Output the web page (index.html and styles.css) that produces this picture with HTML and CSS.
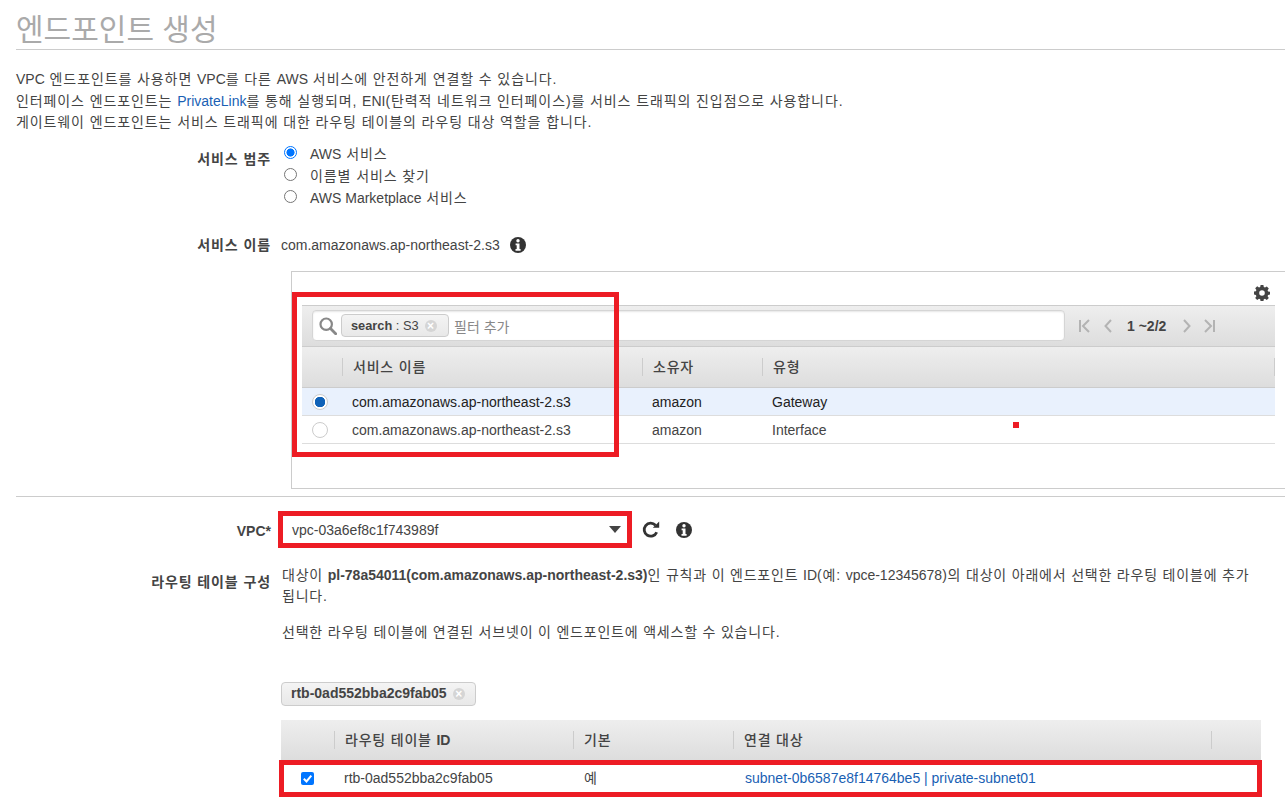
FILE: index.html
```html
<!DOCTYPE html>
<html lang="ko">
<head>
<meta charset="utf-8">
<title>엔드포인트 생성</title>
<link rel="stylesheet" href="styles.css">
</head>
<body>
<main class="page">
  <h1 class="title">엔드포인트 생성</h1>
  <div class="intro ko">
    <p><span class="en">VPC</span> 엔드포인트를 사용하면 <span class="en">VPC</span>를 다른 <span class="en">AWS</span> 서비스에 안전하게 연결할 수 있습니다.</p>
    <p>인터페이스 엔드포인트는 <a class="link en" href="#">PrivateLink</a>를 통해 실행되며, <span class="en">ENI</span>(탄력적 네트워크 인터페이스)를 서비스 트래픽의 진입점으로 사용합니다.</p>
    <p>게이트웨이 엔드포인트는 서비스 트래픽에 대한 라우팅 테이블의 라우팅 대상 역할을 합니다.</p>
  </div>

  <div class="form-row category-row">
    <div class="label ko">서비스 범주</div>
    <div class="radio-list ko">
      <label class="radio-item"><span class="radio on"></span><span><span class="en">AWS</span> 서비스</span></label>
      <label class="radio-item"><span class="radio"></span>이름별 서비스 찾기</label>
      <label class="radio-item"><span class="radio"></span><span><span class="en">AWS Marketplace</span> 서비스</span></label>
    </div>
  </div>

  <div class="form-row name-row">
    <div class="label ko">서비스 이름</div>
    <div class="name-value">com.amazonaws.ap-northeast-2.s3
      <svg class="info" viewBox="0 0 16 16"><circle cx="8" cy="8" r="8" fill="#333"/><circle cx="8" cy="3.7" r="1.7" fill="#fff"/><path d="M5.6 6.5h3.9v5.600h1.100v1.700H5.500v-1.700h1.200V8.200H5.600z" fill="#fff"/></svg>
    </div>
  </div>

  <section class="service-box">
    <div class="gear-line">
      <svg class="gear" viewBox="0 0 16 16"><path fill="#444" fill-rule="evenodd" d="M6.600 0h2.800l.4 2.100 1.200.5L12.800 1.400l2 2-1.200 1.800.5 1.200 2 .4v2.800l-2 .4-.5 1.200 1.200 1.800-2 2-1.800-1.200-1.200.5-.4 2.100H6.600l-.4-2.100-1.200-.5-1.800 1.200-2-2 1.200-1.800-.5-1.200-2-.4V6.600l2-.4.5-1.200-1.200-1.800 2-2L5 2.600l1.200-.5zM8 5.200a2.800 2.800 0 1 0 0 5.600 2.800 2.800 0 0 0 0-5.600z"/></svg>
    </div>
    <div class="service-table">
      <div class="toolbar">
        <div class="search">
          <svg class="mag" viewBox="0 0 18 18"><circle cx="7.200" cy="7.200" r="5.700" fill="none" stroke="#888" stroke-width="2.200"/><path d="M11.500 11.500l5.200 5.200" stroke="#888" stroke-width="2.800" stroke-linecap="round"/></svg>
          <span class="chip search-chip"><b>search</b>&nbsp;: S3<span class="x">×</span></span>
          <span class="placeholder">필터 추가</span>
        </div>
        <div class="pager">
          <svg class="pg-first" viewBox="0 0 11 14"><path d="M1 1v12M10 1L4 7l6 6" fill="none" stroke="#b3b3b3" stroke-width="2"/></svg>
          <svg class="pg-prev" viewBox="0 0 8 14"><path d="M7 1L1.500 7 7 13" fill="none" stroke="#b3b3b3" stroke-width="2"/></svg>
          <b class="pg-text">1 ~2/2</b>
          <svg class="pg-next" viewBox="0 0 8 14"><path d="M1 1l5.500 6L1 13" fill="none" stroke="#b3b3b3" stroke-width="2"/></svg>
          <svg class="pg-last" viewBox="0 0 11 14"><path d="M10 1v12M1 1l6 6-6 6" fill="none" stroke="#b3b3b3" stroke-width="2"/></svg>
        </div>
      </div>
      <table class="grid svc">
        <colgroup><col class="c-a"><col class="c-b"><col class="c-c"><col class="c-d"><col></colgroup>
        <thead><tr>
          <th></th><th><span>서비스 이름</span></th><th><span>소유자</span></th><th><span>유형</span></th><th><span>&nbsp;</span></th>
        </tr></thead>
        <tbody>
          <tr class="selected"><td class="radio-cell"><span class="row-radio on"></span></td><td>com.amazonaws.ap-northeast-2.s3</td><td>amazon</td><td colspan="2">Gateway</td></tr>
          <tr><td class="radio-cell"><span class="row-radio"></span></td><td>com.amazonaws.ap-northeast-2.s3</td><td>amazon</td><td colspan="2">Interface</td></tr>
        </tbody>
      </table>
    </div>
    <i class="mark mark-table"></i>
    <i class="mark-dot"></i>
  </section>

  <hr class="divider">

  <div class="form-row vpc-row">
    <div class="label vpc-label">VPC*</div>
    <div class="select">vpc-03a6ef8c1f743989f<span class="caret"></span></div>
    <svg class="refresh" viewBox="0 0 18 18"><path d="M14.700 11.200A6.500 6.500 0 1 1 13.500 4.300" fill="none" stroke="#333" stroke-width="2.800"/><path d="M10.800 6.800h6.400V.4z" fill="#333"/></svg>
    <svg class="info vpc-info" viewBox="0 0 16 16"><circle cx="8" cy="8" r="8" fill="#333"/><circle cx="8" cy="3.700" r="1.700" fill="#fff"/><path d="M5.600 6.500h3.900v5.600h1.100v1.700H5.500v-1.700h1.200V8.200H5.600z" fill="#fff"/></svg>
  </div>

  <div class="form-row route-row">
    <div class="label ko">라우팅 테이블 구성</div>
    <div class="route-body">
      <div class="route-text">
        <p>대상이 <b class="en">pl-78a54011(com.amazonaws.ap-northeast-2.s3)</b>인 규칙과 이 엔드포인트 <span class="en">ID</span>(예: <span class="en">vpce-12345678</span>)의 대상이 아래에서 선택한 라우팅 테이블에 추가<br>됩니다.</p>
        <p class="route-note">선택한 라우팅 테이블에 연결된 서브넷이 이 엔드포인트에 액세스할 수 있습니다.</p>
      </div>
      <span class="chip rtb-chip"><b>rtb-0ad552bba2c9fab05</b><span class="x">×</span></span>
      <div class="rtb-wrap">
        <table class="grid rtb">
          <colgroup><col class="r-a"><col class="r-b"><col class="r-c"><col class="r-d"><col></colgroup>
          <thead><tr>
            <th></th><th><span>라우팅 테이블 <span class="en id">ID</span></span></th><th><span>기본</span></th><th><span>연결 대상</span></th><th><span>&nbsp;</span></th>
          </tr></thead>
          <tbody>
            <tr><td class="check-cell"><span class="check"><svg viewBox="0 0 13 13"><path d="M2.800 6.800l2.700 2.700 4.800-5.800" fill="none" stroke="#fff" stroke-width="2"/></svg></span></td><td>rtb-0ad552bba2c9fab05</td><td>예</td><td colspan="2"><a class="link" href="#">subnet-0b6587e8f14764be5 | private-subnet01</a></td></tr>
          </tbody>
        </table>
        <i class="mark mark-row"></i>
      </div>
    </div>
  </div>
  <i class="mark mark-select"></i>
</main>
</body>
</html>
```

FILE: styles.css
```css
* { box-sizing: border-box; }
html, body { margin: 0; height: 810px; overflow: hidden; background: #fff; }
body {
  font-family: "Liberation Sans", "Noto Sans CJK KR", sans-serif;
  font-size: 14px;
  color: #444;
}
p { margin: 0; }
.page { position: relative; height: 810px; padding-left: 16px; }
.link { color: #1a5fb4; text-decoration: none; }
.ko { letter-spacing: .9px; }
.en { letter-spacing: 0; }

.title {
  margin: 0;
  height: 50px;
  border-bottom: 1px solid #ccc;
  font-size: 30px;
  font-weight: 400;
  line-height: 29px;
  padding-top: 15px;
  color: #aaa;
}
.intro { padding-top: 19px; line-height: 21.500px; color: #444; }

.form-row { display: flex; }
.label {
  width: 255px;
  flex: none;
  text-align: right;
  font-weight: 700;
  color: #444;
}
.category-row { margin-top: 8px; }
.category-row .label { padding-top: 7px; line-height: 20px; }
.radio-list { margin-left: 13px; display: flex; flex-direction: column; }
.radio-item { display: flex; align-items: center; height: 22px; }
.radio {
  width: 13px; height: 13px; margin-right: 13px;
  border: 1px solid #767676; border-radius: 50%; background: #fff; flex: none;
}
.radio.on { border: 1.500px solid #0075ff; background: radial-gradient(circle, #0075ff 0 3.800px, #fff 4.300px); }

.name-row { margin-top: 27px; line-height: 20px; }
.name-value { margin-left: 10px; display: flex; align-items: center; }
.info { width: 16px; height: 16px; flex: none; }
.name-value .info { margin-left: 10px; }

.service-box {
  position: relative;
  margin: 16px 0 0 275px;
  height: 218px;
  border: 1px solid #ccc;
  border-right: 0;
  padding: 0 10px;
}
.gear-line { height: 33px; display: flex; justify-content: flex-end; padding: 13px 5px 0 0; }
.gear { width: 16px; height: 16px; }
.toolbar {
  height: 42px;
  display: flex;
  align-items: center;
  border-top: 1px solid #ccc;
  border-bottom: 1px solid #ccc;
  background: linear-gradient(#eee, #ddd);
  padding: 0 10px;
}
.search {
  width: 753px; height: 31px;
  display: flex; align-items: center;
  background: #fff;
  border: 1px solid #d5d5d5;
  border-radius: 4px;
  padding-left: 6px;
  box-shadow: inset 0 1px 2px rgba(0,0,0,.1);
}
.mag { width: 18px; height: 18px; flex: none; margin-right: 4px; }
.chip {
  display: inline-flex; align-items: center;
  height: 23px;
  padding: 0 10px 0 9px;
  border: 1px solid #ccc;
  border-radius: 4px;
  background: linear-gradient(#f4f4f4, #e8e8e8);
  color: #444;
  white-space: nowrap;
}
.search-chip { font-size: 12.800px; width: 108px; }
.x {
  width: 12px; height: 12px; margin-left: 6px;
  border-radius: 50%; background: #d5d5d5; color: #fff;
  font-size: 12px; line-height: 12px; text-align: center; font-weight: 700;
}
.placeholder { margin-left: 5px; color: #888; }
.pager { display: flex; align-items: center; margin-left: 14px; }
.pager svg { height: 14px; flex: none; }
.pg-first, .pg-last { width: 11px; }
.pg-prev, .pg-next { width: 8px; }
.pg-prev { margin-left: 14px; }
.pg-text { margin: 0 17px 0 15px; white-space: nowrap; color: #444; }
.pg-last { margin-left: 13px; }

.grid { border-collapse: collapse; table-layout: fixed; width: 100%; }
.grid th {
  height: 41px; padding: 0;
  background: linear-gradient(#eee, #ddd);
  font-weight: 400; text-align: left; color: #444;
}
.grid th > span {
  display: block; height: 18px; line-height: 18px;
  border-left: 1px solid #ccc; padding-left: 10px;
  font-weight: 500; letter-spacing: .8px;
}
.grid th .id { font-weight: 700; }
.grid td { padding: 0 0 0 10px; white-space: nowrap; }
.svc thead th { border-bottom: 1px solid #ccc; }
.svc td { height: 28px; border-bottom: 1px solid #ddd; color: #444; }
.svc .selected td { background: #e9f1fd; color: #222; }
.c-a { width: 40px; } .c-b { width: 300px; } .c-c { width: 120px; } .c-d { width: 512px; }
.radio-cell { padding: 0 !important; text-align: center; }
.row-radio {
  display: block; width: 16px; height: 16px; margin: 0 0 0 10px;
  border-radius: 50%; border: 1px solid #ccc; background: #fff;
}
.row-radio.on { background: radial-gradient(circle, #0f62b8 0 5px, #fff 5.500px); }

.divider { margin: 7px 0 0; border: 0; border-top: 1px solid #ccc; }
.vpc-row { margin-top: 16px; align-items: center; height: 34px; }
.vpc-label { padding-top: 2px; }
.select {
  width: 340px; height: 24px; margin-left: 21px;
  display: flex; align-items: center; justify-content: space-between;
  color: #444;
}
.caret { width: 0; height: 0; margin-right: 11px; border: 6px solid transparent; border-top: 7px solid #444; border-bottom: 0; }
.refresh { width: 18px; height: 18px; margin-left: 10px; flex: none; }
.vpc-info { margin-left: 16px; }

.route-row { margin-top: 18px; }
.route-row .label { padding-top: 7px; line-height: 20px; }
.route-body { margin-left: 10px; width: 980px; line-height: 21px; }
.route-text { padding-left: 1px; letter-spacing: .8px; }
.route-note { margin-top: 15px; }
.rtb-chip { margin-top: 39px; height: 24px; }
.rtb-wrap { position: relative; margin-top: 14px; }
.rtb th { height: 40px; }
.rtb td { height: 37px; color: #444; }
.rtb td:nth-child(3) { padding-left: 11px; }
.rtb td:nth-child(4) { padding-left: 12px; }
.r-a { width: 53px; } .r-b { width: 239px; } .r-c { width: 160px; } .r-d { width: 478px; }
.check-cell { padding: 0 0 0 20px !important; }
.check { display: block; width: 13px; height: 13px; border-radius: 2px; background: #0075ff; }
.check svg { display: block; width: 13px; height: 13px; }

.mark { position: absolute; display: block; border: 5px solid #ed1c24; pointer-events: none; }
.mark-table { left: 0; top: 20px; width: 327px; height: 165px; }
.mark-dot { position: absolute; left: 721px; top: 150px; width: 6px; height: 6px; background: #ed1c24; }
.mark-row { left: -2px; top: 40px; width: 983px; height: 37px; }
.mark-select { left: 278px; top: 511px; width: 354px; height: 37px; }
```
